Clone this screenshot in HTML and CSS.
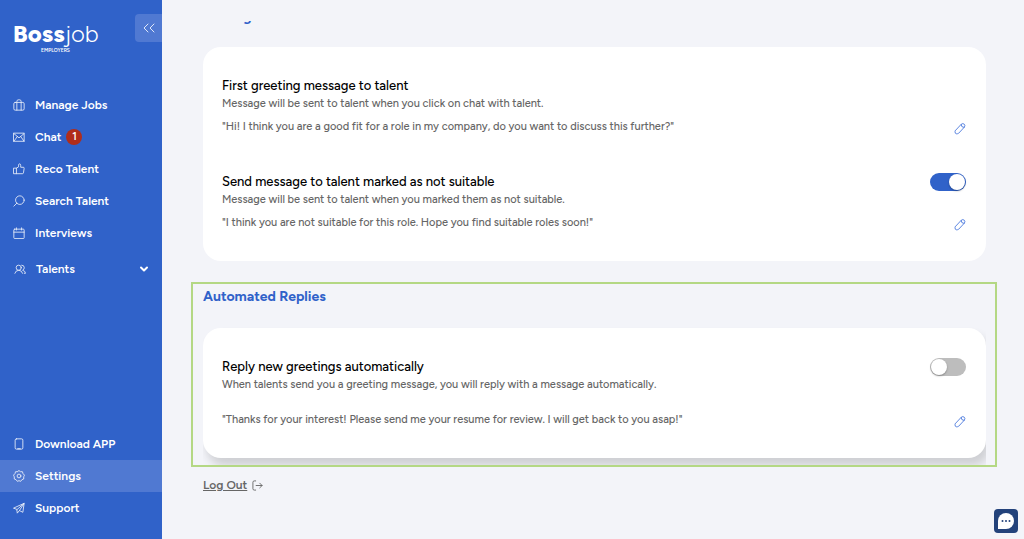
FILE: index.html
```html
<!DOCTYPE html>
<html lang="en">
<head>
<title>Bossjob Employers - Settings</title>
<meta charset="utf-8">
<meta name="viewport" content="width=device-width, initial-scale=1">
<link rel="stylesheet" href="styles.css">
</head>

<body>

<svg class="defs" aria-hidden="true">
    <symbol id="pencil" viewBox="0 0 14 14">
        <path d="M1.500 9.500 8.500 2Q10.300 .500 12 2 13.500 3.700 12 5.500L5.500 12.500Q4.500 13.300 2.500 13.200 1.200 13 1.200 11ZM8.300 2.400Q8.200 5.800 11.700 5.800"/>
    </symbol>
</svg>

<aside class="sidebar">
    <div class="top">
        <a href="#" class="logo"><b>Boss</b>job<small>EMPLOYERS</small></a>
        <button type="button" class="collapse" aria-label="Collapse menu">
            <svg viewBox="0 0 14 14"><path d="M6 3 2 7l4 4M12 3 8 7l4 4"/></svg>
        </button>
    </div>

    <nav class="nav">
        <a href="#">
            <svg class="icon" viewBox="0 0 14 14"><rect x="1" y="4" width="12" height="9" rx="1.500"/><path d="M4.500 13V3Q4.500 1 6 1H8Q9.500 1 9.500 3V13"/></svg>
            Manage Jobs
        </a>
        <a href="#">
            <svg class="icon" viewBox="0 0 14 14"><rect x="1" y="2.500" width="12" height="9.500"/><path d="M1 3 7 8 13 3M1 12 5 6.500M13 12 9 6.500"/></svg>
            Chat <span class="badge">1</span>
        </a>
        <a href="#">
            <svg class="icon" viewBox="0 0 14 14"><path d="M1 6H4V12.500H1ZM4 6 6.500 4.500V2.500Q6.500 1 7.700 1 9 1 9 3V5H12Q13.200 5 13 6.200L12.200 11.500Q12 12.500 11 12.500H4"/></svg>
            Reco Talent
        </a>
        <a href="#">
            <svg class="icon" viewBox="0 0 14 14"><circle cx="8" cy="6" r="5"/><path d="M4.500 9.500 1 13"/></svg>
            Search Talent
        </a>
        <a href="#">
            <svg class="icon" viewBox="0 0 14 14"><rect x="1" y="2.500" width="12" height="11" rx="1"/><path d="M1 6H13M4 1V3.500M10 1V3.500"/></svg>
            Interviews
        </a>
        <a href="#" class="group">
            <svg class="icon" viewBox="0 0 14 14"><circle cx="5.500" cy="5.500" r="3"/><path d="M1 12Q2 8.500 5.500 8.500T10 12M9 2.500Q12 2.500 12 5.500 12 7.500 10 8.500 13 9 13.500 12H12"/></svg>
            Talents
            <svg class="chevron" viewBox="0 0 10 10"><path d="M2 3.500 5 6.500 8 3.500"/></svg>
        </a>
    </nav>

    <nav class="nav bottom">
        <a href="#">
            <svg class="icon" viewBox="0 0 14 14"><rect x="2.500" y="1" width="9" height="12" rx="1.500"/><path d="M5.500 12.500H8.500"/></svg>
            Download APP
        </a>
        <a href="#" class="active">
            <svg class="icon" viewBox="0 0 14 14"><path d="M7 .700 8.700 2 11 2 11.700 4.200 13.400 6 12.500 8 12.500 10.500 10.400 11.300 9 13.200 7 12.500 5 13.200 3.600 11.300 1.500 10.500 1.500 8 .600 6 2.300 4.200 3 2 5.300 2Z"/><circle cx="7" cy="7" r="2.200"/></svg>
            Settings
        </a>
        <a href="#">
            <svg class="icon" viewBox="0 0 14 14"><path d="M1 7 13 1.500 11.500 12 7.500 10 5 13 4.500 9ZM4.500 9 13 1.500 7.500 10"/></svg>
            Support
        </a>
    </nav>
</aside>

<main class="main">
    <section class="section first">
        <h2>Messages</h2>
        <div class="card">
            <div class="item">
                <h3>First greeting message to talent</h3>
                <p>Message will be sent to talent when you click on chat with talent.</p>
                <div class="message">
                    <p>"Hi! I think you are a good fit for a role in my company, do you want to discuss this further?"</p>
                    <button type="button" class="edit" aria-label="Edit message"><svg><use href="#pencil"/></svg></button>
                </div>
            </div>
            <div class="item">
                <div class="title">
                    <h3><label for="unsuitable">Send message to talent marked as not suitable</label></h3>
                    <input type="checkbox" id="unsuitable" class="switch" checked>
                </div>
                <p>Message will be sent to talent when you marked them as not suitable.</p>
                <div class="message">
                    <p>"I think you are not suitable for this role. Hope you find suitable roles soon!"</p>
                    <button type="button" class="edit" aria-label="Edit message"><svg><use href="#pencil"/></svg></button>
                </div>
            </div>
        </div>
    </section>

    <div class="highlight">
        <section class="section replies">
            <h2>Automated Replies</h2>
            <div class="card shadow">
                <div class="item">
                    <div class="title">
                        <h3><label for="reply">Reply new greetings automatically</label></h3>
                        <input type="checkbox" id="reply" class="switch">
                    </div>
                    <p>When talents send you a greeting message, you will reply with a message automatically.</p>
                    <div class="message spaced">
                        <p>"Thanks for your interest! Please send me your resume for review. I will get back to you asap!"</p>
                        <button type="button" class="edit" aria-label="Edit message"><svg><use href="#pencil"/></svg></button>
                    </div>
                </div>
            </div>
        </section>
    </div>

    <a href="#" class="logout">
        <span>Log Out</span>
        <svg viewBox="0 0 12 12"><path d="M4 1H2.500Q1 1 1 2.500V9.500Q1 11 2.500 11H4M4.500 6H11M8.500 3.500 11 6 8.500 8.500"/></svg>
    </a>
</main>

<button type="button" class="help" aria-label="Open chat">
    <svg viewBox="0 0 18 18"><path d="M1 17V9A8 8 0 1 1 9 17Z"/><circle cx="5.500" cy="9" r="1"/><circle cx="9" cy="9" r="1"/><circle cx="12.500" cy="9" r="1"/></svg>
</button>

</body>
</html>
```

FILE: styles.css
```css
*{margin:0;padding:0;box-sizing:border-box;}
body{display:flex;min-height:100vh;background:#f3f4f9;color:#666;font:500 11px/16px Figtree,Lato,"Open Sans",sans-serif;}
a{color:inherit;text-decoration:none;}
button{border:0;background:none;font:inherit;cursor:pointer;}
svg{display:block;fill:none;stroke:currentColor;stroke-linecap:round;stroke-linejoin:round;}
.defs{position:absolute;width:0;height:0;}

/* sidebar */
.sidebar{display:flex;flex-direction:column;flex:none;width:162px;padding-bottom:15px;background:#3062c9;color:#fff;}
.top{display:flex;justify-content:space-between;padding-top:14px;height:89px;}
.logo{padding:6px 0 0 13px;font-size:24px;line-height:28px;font-weight:300;}
.logo b{font-weight:800;}
.logo small{display:block;padding-left:28px;font-size:5px;line-height:5px;font-weight:600;}
.collapse{width:27px;height:28px;padding-left:7px;border-radius:4px 0 0 4px;background:#5079d2;color:#dfe8fa;}
.collapse svg{width:14px;height:14px;}
.nav a{display:flex;align-items:center;gap:10px;height:32px;padding:0 13px;font-size:12px;font-weight:600;}
.nav .icon{flex:none;width:12px;height:12px;opacity:.9;}
.nav .active{background:#5079d2;}
.nav .group{height:40px;padding-left:14px;}
.badge{width:16px;height:16px;margin-left:-5px;border-radius:50%;background:#b02d1b;font-size:11px;line-height:16px;text-align:center;}
.chevron{width:10px;height:10px;margin-left:auto;stroke-width:2;}
.bottom{margin-top:auto;}

/* content */
.main{flex:1;min-width:0;padding:21px 38px 0 41px;}
.section{overflow:hidden;}
.section h2{color:#3062c9;font-size:14px;line-height:20px;font-weight:700;}
.first h2{margin:-14px 0 20px;}
.card{padding:28px 20px 30px 19px;border-radius:18px;background:#fff;}
.shadow{box-shadow:4px 8px 10px rgba(0,0,0,.15);}
.item + .item{margin-top:36px;}
.item h3{color:#000;font-size:13px;line-height:21px;font-weight:500;}
.title{display:flex;align-items:center;justify-content:space-between;}
.message{display:flex;align-items:center;justify-content:space-between;margin-top:6px;}
.spaced{margin-top:18px;}
.edit{padding-top:4px;color:#4474dc;}
.edit svg{width:12px;height:13px;}
.switch{appearance:none;flex:none;width:36px;height:18px;padding:1px;border-radius:9px;background:#bdbdbd;cursor:pointer;}
.switch::before{content:"";display:block;width:16px;height:16px;border-radius:50%;background:#fff;box-shadow:0 1px 2px rgba(0,0,0,.3);}
.switch:checked{background:#3062c9;}
.switch:checked::before{margin-left:auto;}
.highlight{margin:21px -11px 0 -12px;padding:0 9px 0 10px;border:2px solid #b4d884;}
.replies{padding-bottom:7px;}
.replies h2{margin:3px 0 21px;}
.logout{display:inline-flex;align-items:center;gap:5px;margin-top:10px;font-size:12px;font-weight:600;}
.logout span{text-decoration:underline;}
.logout svg{width:11px;height:11px;}

.help{position:fixed;right:6px;bottom:6px;width:24px;height:24px;padding:3px;border-radius:4px;background:#23427b;}
.help svg{fill:#fff;stroke:none;}
.help circle{fill:#23427b;}
```
